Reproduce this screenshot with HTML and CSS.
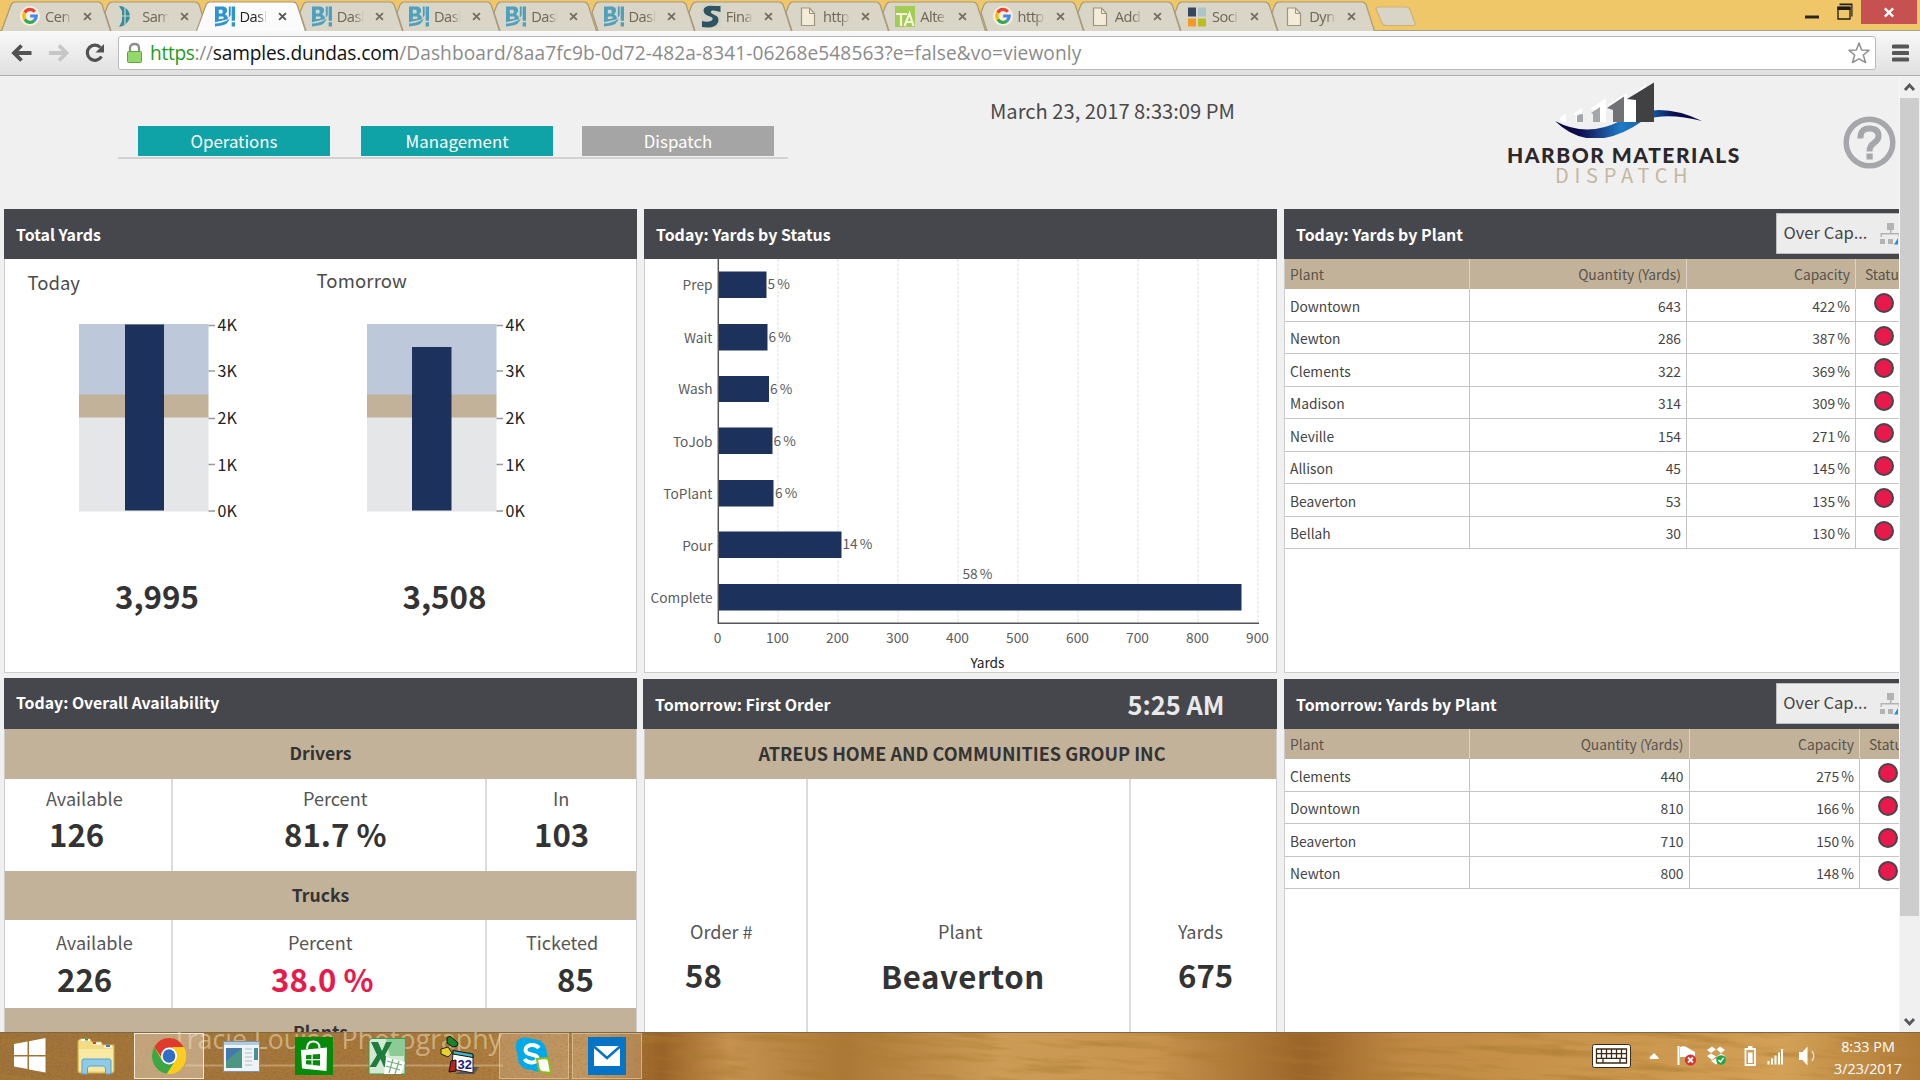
FILE: index.html
```html
<!DOCTYPE html>
<html lang="en">
<head>
<meta charset="utf-8">
<title>Dashboard</title>
<link rel="stylesheet" href="styles.css">
</head>
<body>
<svg class="defs" width="0" height="0" aria-hidden="true">
  <defs>
    <symbol id="tab" viewBox="0 0 110 30"><path d="M13 30.5 L7 12 L10 4.5 Q11.2 1.5 14 1.5 H97 Q100 1.5 101.2 4.5 L109.5 30.5"/></symbol>
    <symbol id="tab-full" viewBox="0 0 110 30"><path d="M.5 30.5 L10 4.5 Q11.2 1.5 14 1.5 H97 Q100 1.5 101.2 4.5 L109.5 30.5"/></symbol>
    <symbol id="x" viewBox="0 0 10 10"><path d="M1.2 1.2 L8.8 8.8 M8.8 1.2 L1.2 8.8" fill="none" stroke="currentColor" stroke-width="2.1"/></symbol>
    <symbol id="google" viewBox="0 0 20 24"><circle cx="10" cy="12" r="10" fill="#f7f0df"/><g fill="none" stroke-width="3.2"><path d="M14.8 7.8 A6.2 6.6 0 0 0 4.7 8.6" stroke="#ea4335"/><path d="M4.7 8.6 A6.5 6.6 0 0 0 4.8 15.4" stroke="#fbbc05"/><path d="M4.8 15.4 A6.2 6.6 0 0 0 14.2 16.6" stroke="#34a853"/><path d="M14.2 16.6 A6.5 6.6 0 0 0 16.2 12 H10.2" stroke="#4285f4"/></g></symbol>
    <symbol id="dundas" viewBox="0 0 20 24"><path d="M2 2 Q8 2 11 6.500 Q15 12 11 17.500 Q8 22 2 23 L5 17 V7 Z" fill="#2f8f9f"/><path d="M8 3 V21 M4 12 H13" stroke="#d9d4c3" stroke-width="1.200"/></symbol>
    <symbol id="bi" viewBox="0 0 21 24"><path fill="currentColor" fill-rule="evenodd" d="M0 2 H9 Q13.500 3 12.500 7.500 L10.500 10.500 Q14 12 13.500 15.500 L0 18.500 Z M4 5.500 V9.500 H7.500 Q9 7.500 7.500 5.500 Z M4 12.500 V15.500 L8.500 14.800 Q10 13 8 12.500 Z M14.500 2 H16.500 V11 L14.500 14 Z M17.500 2 H21 V17 H17.500 Z M17.500 18.500 H21 V23 H17.500 Z M0 20 Q8 20 15.500 15 Q13 21.500 7 22 L0 23 Z"/></symbol>
    <symbol id="bigs" viewBox="0 0 20 24"><rect width="20" height="24" fill="#d3d2c5"/><path d="M19.500 2 H13 Q3 1 2.500 6.500 Q3 11 9 12.500 Q14 14 10 17 Q6 18.500 1 17 V23 Q14 25 17 18.500 Q19 12.500 12.500 10.500 Q8 8.500 11 6.500 Q14 6 19.500 8 Z" fill="#2e5462"/></symbol>
    <symbol id="page" viewBox="0 0 20 24"><path d="M3.500 4 H11.500 L16.500 9.500 V21.500 H3.500 Z" fill="#f4ebd9" stroke="#9d957f" stroke-width="1.200"/><path d="M11.500 4 V9.500 H16.500" fill="none" stroke="#9d957f"/></symbol>
    <symbol id="ta" viewBox="0 0 20 24"><rect y="2" width="20" height="21" fill="#a3cc52"/><path d="M1 10 H12 M6 10 V22 M9.500 22 L14.500 9.500 L18.500 22 M11 18 H17" fill="none" stroke="#f4f3df" stroke-width="2.200"/></symbol>
    <symbol id="squares" viewBox="0 0 20 24"><path d="M1 3.500 H9 V12.500 H1 Z" fill="#33475e"/><path d="M11 3.500 H19 V12.500 H11 Z" fill="#adc4c9"/><path d="M1 14.500 H9 V22.500 H1 Z" fill="#f49a22"/><path d="M11 14.500 H19 V22.500 H11 Z" fill="#bcbd20"/></symbol>
    <symbol id="hier" viewBox="0 0 24 24"><path d="M8 1 h7 v7 h-7 z M11 8 h1.500 v3 H21 v4 h-1.500 v-2.500 H3 V15 H1.500 V11 H11 Z M1 17 h5 v5 h-5 z M9 17 h5 v5 h-5 z" fill="#b3b3b3"/><path d="M15 22.500 L19 16 V22.500 Z" fill="#1c94d4"/></symbol>
  </defs>
</svg>

<div class="screen">
  <header class="strip">
    <div class="tabs">
      <div class="tab"><svg class="shape"><use href="#tab-full"/></svg><svg class="fav"><use href="#google"/></svg><span>Cen</span><svg class="close"><use href="#x"/></svg></div>
      <div class="tab"><svg class="shape"><use href="#tab"/></svg><svg class="fav"><use href="#dundas"/></svg><span>Sam</span><svg class="close"><use href="#x"/></svg></div>
      <div class="tab active"><svg class="shape"><use href="#tab-full"/></svg><svg class="fav"><use href="#bi"/></svg><span>Dasl</span><svg class="close"><use href="#x"/></svg></div>
      <div class="tab"><svg class="shape"><use href="#tab"/></svg><svg class="fav"><use href="#bi"/></svg><span>Dasl</span><svg class="close"><use href="#x"/></svg></div>
      <div class="tab"><svg class="shape"><use href="#tab"/></svg><svg class="fav"><use href="#bi"/></svg><span>Dasl</span><svg class="close"><use href="#x"/></svg></div>
      <div class="tab"><svg class="shape"><use href="#tab"/></svg><svg class="fav"><use href="#bi"/></svg><span>Dasl</span><svg class="close"><use href="#x"/></svg></div>
      <div class="tab"><svg class="shape"><use href="#tab"/></svg><svg class="fav"><use href="#bi"/></svg><span>Dasl</span><svg class="close"><use href="#x"/></svg></div>
      <div class="tab"><svg class="shape"><use href="#tab"/></svg><svg class="fav"><use href="#bigs"/></svg><span>Fina</span><svg class="close"><use href="#x"/></svg></div>
      <div class="tab"><svg class="shape"><use href="#tab"/></svg><svg class="fav"><use href="#page"/></svg><span>http</span><svg class="close"><use href="#x"/></svg></div>
      <div class="tab"><svg class="shape"><use href="#tab"/></svg><svg class="fav"><use href="#ta"/></svg><span>Alte</span><svg class="close"><use href="#x"/></svg></div>
      <div class="tab"><svg class="shape"><use href="#tab"/></svg><svg class="fav"><use href="#google"/></svg><span>http</span><svg class="close"><use href="#x"/></svg></div>
      <div class="tab"><svg class="shape"><use href="#tab"/></svg><svg class="fav"><use href="#page"/></svg><span>Add</span><svg class="close"><use href="#x"/></svg></div>
      <div class="tab"><svg class="shape"><use href="#tab"/></svg><svg class="fav"><use href="#squares"/></svg><span>Soci</span><svg class="close"><use href="#x"/></svg></div>
      <div class="tab"><svg class="shape"><use href="#tab"/></svg><svg class="fav"><use href="#page"/></svg><span>Dyn</span><svg class="close"><use href="#x"/></svg></div>
    </div>
    <svg class="newtab" viewBox="0 0 42 22"><path d="M1 3 Q1 1 3.500 1 H31 Q34 1 35 3.500 L40 17 Q40.500 19.500 38 19.500 H11 Q8 19.500 7 17 Z" fill="#d8d5c6" stroke="#cbb27c" stroke-width="1.200"/></svg>
    <div class="winbtns">
      <svg width="56" height="30" viewBox="0 0 56 30"><path d="M0 15.500 H14 V18.500 H0 Z" fill="#2a2622"/><path d="M33 7.500 H45 V19 H33 Z" fill="none" stroke="#1f1c1a" stroke-width="1.300"/><path d="M32.400 6.500 H45.500 V10 H32.400 Z M34.500 3.500 H47.500 V5.300 H34.500 Z M46.300 4 H47.500 V16.500 H46.300 Z" fill="#1f1c1a"/></svg>
      <div class="winclose"><svg width="12" height="11" viewBox="0 0 10 10"><use href="#x"/></svg></div>
    </div>
  </header>

  <div class="toolbar">
    <svg class="navicons" width="110" height="24" viewBox="0 0 110 24">
      <path d="M31.500 12 H15 M21.500 4.500 L14 12 L21.500 19.500" fill="none" stroke="#525252" stroke-width="3.800"/>
      <path d="M49 12 H65 M59 4.500 L66.500 12 L59 19.500" fill="none" stroke="#c6c6c6" stroke-width="3.800"/>
      <path d="M100.500 6.500 A7.600 7.600 0 1 0 101.500 15.500" fill="none" stroke="#525252" stroke-width="3.200"/><path d="M104 3 V11.500 H95.500 Z" fill="#525252"/>
    </svg>
    <div class="omnibox">
      <svg class="lock" width="17" height="22" viewBox="0 0 17 22"><path d="M4 11 V6 Q4 2 8.500 2 Q13 2 13 6 V11" fill="none" stroke="#8d8d8d" stroke-width="2.300"/><rect x="1.500" y="9.500" width="14" height="11" rx="1" fill="#93d86b" stroke="#5da83c"/></svg>
      <div class="url"><span class="scheme"><i class="sec">https</i>://</span><b>samples.dundas.com</b>/Dashboard/8aa7fc9b-0d72-482a-8341-06268e548563?e=false&amp;vo=viewonly</div>
      <svg class="star" width="24" height="24" viewBox="0 0 24 24"><path d="M12 2 L14.600 9 L22 9.300 L16.300 14 L18.600 21.500 L12 17.800 L5.400 21.500 L7.700 14 L2 9.300 L9.400 9 Z" fill="#fff" stroke="#8f8f8f" stroke-width="1.500" stroke-linejoin="round"/></svg>
    </div>
    <svg class="menu" width="17" height="18" viewBox="0 0 17 18"><path d="M1.500 2.500 H15.500 M1.500 9 H15.500 M1.500 15.500 H15.500" stroke="#565656" stroke-width="4" stroke-linecap="round"/></svg>
  </div>

  <div class="viewport">
    <main class="page">
      <div class="top">
        <nav class="nav"><a>Operations</a><a>Management</a><a class="off">Dispatch</a></nav>
        <div class="now">March 23, 2017 8:33:09 PM</div>
        <div class="brand">
          <svg width="150" height="56" viewBox="0 0 150 56">
            <defs><linearGradient id="wave"><stop offset="0" stop-color="#0b0a3c"/><stop offset=".17" stop-color="#100c50"/><stop offset=".45" stop-color="#1e7cc6"/><stop offset=".68" stop-color="#12529c"/><stop offset=".82" stop-color="#0b0a4c"/><stop offset="1" stop-color="#0b0840"/></linearGradient></defs>
            <path d="M1 39 Q33 56 66 39 Q103 17 148 39 Q113 30 90 38 Q38 75 1 39 Z" fill="url(#wave)"/>
            <path d="M6 36 L12 31 V40 H7 Z M19 32 L28 26 V40 H22 V33 Z M36 27 L52 16 V40 H45 V29 Z M53 23 L73 11 V40 H67 V22 Z M73 18 L92 2 V40 H81 V20 Z" fill="#fff"/>
            <path d="M23 34 Q24 32 29 32 V40 H23 Z M37 31 L46 25 V40 H39 V32 Z" fill="#a3a6aa"/><path d="M53 26 L70 14.500 V40 H59 V28 Z" fill="#717276"/>
            <path d="M73 17 L100 .500 V40 H82 V18 Z" fill="#414042"/><path d="M73 19 L81.500 18.500 V40 H72 Z" fill="#fff"/>
          </svg>
          <strong>HARBOR MATERIALS</strong>
          <em>DISPATCH</em>
        </div>
        <svg class="help" width="53" height="53" viewBox="0 0 53 53"><circle cx="26.500" cy="26.500" r="23.300" fill="none" stroke="#a6a7ab" stroke-width="5.500"/><path d="M17.500 22.500 Q17 12.500 26.500 12.500 Q35.500 12.500 35.500 20 Q35.500 24 31 27 Q26.500 30 26.500 35.500" fill="none" stroke="#a6a7ab" stroke-width="6"/><path d="M23.500 37.500 h6.200 v6 h-6.200 z" fill="#a6a7ab"/></svg>
      </div>

      <div class="grid">
        <section class="panel">
          <h2>Total Yards</h2>
          <div class="body">
            <svg class="gauges" width="631" height="413" viewBox="5 259 631 413">
              <text x="27.500" y="290" class="lab">Today</text><text x="316.500" y="287.500" class="lab wider">Tomorrow</text>
              <g id="scale">
                <rect x="79" y="324" width="129.500" height="71" fill="#bdc8db"/><rect x="79" y="394.500" width="129.500" height="23.500" fill="#c2b299"/><rect x="79" y="417.500" width="129.500" height="94" fill="#e4e6e8"/>
                <path d="M208.500 325.500 h6.500 M208.500 371 h6.500 M208.500 418.500 h6.500 M208.500 464.500 h6.500 M208.500 511 h6.500" stroke="#999" stroke-width="1.300"/>
                <g class="tick"><text x="217.500" y="330.500">4K</text><text x="217.500" y="377">3K</text><text x="217.500" y="424">2K</text><text x="217.500" y="470.500">1K</text><text x="217.500" y="516.500">0K</text></g>
              </g>
              <use href="#scale" x="288"/>
              <rect x="125" y="324.500" width="39" height="186" class="bar"/><rect x="412" y="347" width="39.500" height="163.500" class="bar"/>
              <text x="157" y="608.500" class="big">3,995</text><text x="444.500" y="608.500" class="big">3,508</text>
            </svg>
          </div>
        </section>

        <section class="panel">
          <h2>Today: Yards by Status</h2>
          <div class="body">
            <svg class="chart" width="631" height="413" viewBox="645 259 631 413">
              <path d="M778 259 V622 M838 259 V622 M898 259 V622 M958 259 V622 M1018 259 V622 M1078 259 V622 M1138 259 V622 M1198 259 V622 M1258 259 V622" stroke="#e8e8e8" stroke-width="1.400" stroke-dasharray="3 1.500"/>
              <g class="bar"><path d="M718 271.500 H766.500 V298 H718 Z M718 324 H767.500 V350.500 H718 Z M718 376 H769 V402 H718 Z M718 427.500 H772.500 V454 H718 Z M718 480 H773.500 V506.500 H718 Z M718 531.500 H841.500 V558 H718 Z M718 584 H1241.500 V610.500 H718 Z"/></g>
              <path d="M718.300 259 V623.300 H1259" fill="none" stroke="#55565a" stroke-width="1.500"/>
              <g class="cat"><text x="712.500" y="290">Prep</text><text x="712.500" y="342.500">Wait</text><text x="712.500" y="394">Wash</text><text x="712.500" y="446.500">ToJob</text><text x="712.500" y="499">ToPlant</text><text x="712.500" y="550.500">Pour</text><text x="712.500" y="603">Complete</text></g>
              <g class="pct"><text x="767.500" y="289">5 %</text><text x="768.500" y="341.500">6 %</text><text x="770" y="393.500">6 %</text><text x="773.500" y="445.500">6 %</text><text x="775" y="498">6 %</text><text x="842.500" y="549">14 %</text><text x="962.500" y="579">58 %</text></g>
              <g class="num"><text x="717.500" y="643">0</text><text x="777.500" y="643">100</text><text x="837.500" y="643">200</text><text x="897.500" y="643">300</text><text x="957.500" y="643">400</text><text x="1017.500" y="643">500</text><text x="1077.500" y="643">600</text><text x="1137.500" y="643">700</text><text x="1197.500" y="643">800</text><text x="1257.500" y="643">900</text><text x="987.500" y="668" class="axis">Yards</text></g>
            </svg>
          </div>
        </section>

        <section class="panel wide">
          <h2>Today: Yards by Plant<span class="filter">Over Cap...<svg width="24" height="24"><use href="#hier"/></svg></span></h2>
          <div class="body">
            <table class="plants">
              <colgroup><col class="c1"><col class="c2"><col class="c3"><col></colgroup>
              <tr><th>Plant</th><th>Quantity (Yards)</th><th>Capacity</th><th>Status</th></tr>
              <tr><td>Downtown</td><td>643</td><td>422 %</td><td><i></i></td></tr>
              <tr><td>Newton</td><td>286</td><td>387 %</td><td><i></i></td></tr>
              <tr><td>Clements</td><td>322</td><td>369 %</td><td><i></i></td></tr>
              <tr><td>Madison</td><td>314</td><td>309 %</td><td><i></i></td></tr>
              <tr><td>Neville</td><td>154</td><td>271 %</td><td><i></i></td></tr>
              <tr><td>Allison</td><td>45</td><td>145 %</td><td><i></i></td></tr>
              <tr><td>Beaverton</td><td>53</td><td>135 %</td><td><i></i></td></tr>
              <tr><td>Bellah</td><td>30</td><td>130 %</td><td><i></i></td></tr>
            </table>
          </div>
        </section>

        <section class="panel avail">
          <h2>Today: Overall Availability</h2>
          <div class="body">
            <h3>Drivers</h3>
            <div class="stats drivers">
              <div><p>Available</p><b>126</b></div><div><p>Percent</p><b>81.7 %</b></div><div><p>In</p><b>103</b></div>
            </div>
            <h3>Trucks</h3>
            <div class="stats trucks">
              <div><p>Available</p><b>226</b></div><div><p>Percent</p><b class="red">38.0 %</b></div><div><p>Ticketed</p><b>85</b></div>
            </div>
            <h3>Plants</h3>
          </div>
        </section>

        <section class="panel lower first">
          <h2>Tomorrow: First Order<time>5:25 AM</time></h2>
          <div class="body">
            <h3>ATREUS HOME AND COMMUNITIES GROUP INC</h3>
            <div class="stats order">
              <div><p>Order #</p><b>58</b></div><div><p>Plant</p><b>Beaverton</b></div><div><p>Yards</p><b>675</b></div>
            </div>
          </div>
        </section>

        <section class="panel wide lower">
          <h2>Tomorrow: Yards by Plant<span class="filter">Over Cap...<svg width="24" height="24"><use href="#hier"/></svg></span></h2>
          <div class="body">
            <table class="plants tomorrow">
              <colgroup><col class="c1"><col class="c2"><col class="c3"><col></colgroup>
              <tr><th>Plant</th><th>Quantity (Yards)</th><th>Capacity</th><th>Status</th></tr>
              <tr><td>Clements</td><td>440</td><td>275 %</td><td><i></i></td></tr>
              <tr><td>Downtown</td><td>810</td><td>166 %</td><td><i></i></td></tr>
              <tr><td>Beaverton</td><td>710</td><td>150 %</td><td><i></i></td></tr>
              <tr><td>Newton</td><td>800</td><td>148 %</td><td><i></i></td></tr>
            </table>
          </div>
        </section>
      </div>
    </main>
    <div class="scroll">
      <svg width="20" height="22" viewBox="0 0 20 22"><path d="M5 14 L9.500 9 L14 14" fill="none" stroke="#55565a" stroke-width="2.800"/></svg>
      <div class="thumb"></div>
      <svg width="20" height="22" viewBox="0 0 20 22"><path d="M5 9 L9.500 14 L14 9" fill="none" stroke="#55565a" stroke-width="2.800"/></svg>
    </div>
  </div>

  <footer class="taskbar">
    <svg class="wood" width="1920" height="48" viewBox="0 0 1920 48">
      <defs>
        <linearGradient id="woodbase"><stop offset="0" stop-color="#a0733c"/><stop offset=".22" stop-color="#a87840"/><stop offset=".31" stop-color="#b78547"/><stop offset=".345" stop-color="#9a6226"/><stop offset=".38" stop-color="#c69250"/><stop offset=".44" stop-color="#ac7836"/><stop offset=".52" stop-color="#cc9c56"/><stop offset=".6" stop-color="#c8944e"/><stop offset=".68" stop-color="#9b6428"/><stop offset=".73" stop-color="#bf8844"/><stop offset=".8" stop-color="#c8924a"/><stop offset=".93" stop-color="#d2a056"/><stop offset="1" stop-color="#b07a38"/></linearGradient>
        <filter id="grain" x="0" y="0" width="100%" height="100%"><feTurbulence type="fractalNoise" baseFrequency=".012 .12" numOctaves="4" seed="7"/><feColorMatrix values="0 0 0 0 .4  0 0 0 0 .2  0 0 0 0 .03  0 3 0 0 -1.400"/></filter>
        <filter id="speck" x="0" y="0" width="100%" height="100%"><feTurbulence type="fractalNoise" baseFrequency=".35 .5" numOctaves="2" seed="3"/><feColorMatrix values="0 0 0 0 .25  0 0 0 0 .13  0 0 0 0 .02  0 2.500 0 0 -1.150"/></filter>
      </defs>
      <rect width="1920" height="48" fill="url(#woodbase)"/>
      <g transform="rotate(4 960 24)"><rect x="-20" y="-80" width="1960" height="208" filter="url(#grain)" opacity=".6"/></g>
      <rect width="650" height="48" filter="url(#speck)" opacity=".55"/>
      <path d="M185 33.500 H503" stroke="#d8c49c" stroke-opacity=".5" stroke-width="2"/>
      <path d="M0 .500 H1920" stroke="#7d6a45"/>
    </svg>
    <div class="mark">Tracie Louise Photography</div>
    <div class="apps">
      <div class="app"><svg width="34" height="36" viewBox="0 0 34 36"><path d="M1 6 L14.500 3.500 V17 H1 Z M16 3.200 L32.500 0 V17 H16 Z M1 18.500 H14.500 V31 L1 28.500 Z M16 18.500 H32.500 V34.500 L16 31.500 Z" fill="#fff"/></svg></div>
      <div class="app"><svg width="40" height="40" viewBox="0 0 40 40"><path d="M3 3 H13 L15 6 H24 L26 9 H37 V35 Q37 37 35 37 H3 Q1 37 1 35 V5 Z" fill="#f1dc83" stroke="#cfae4d"/><path d="M4 3 h9 v2 h-9 z M16 6.500 h8 v2 h-8 z M27 9.500 h8 v2 h-8 z" fill="#fff"/><path d="M8 2.500 h3 v2 h-3 z" fill="#2f9b45"/><path d="M16 6 h3 v2 h-3 z" fill="#d23a2e"/><path d="M29 9 h4 v2 h-4 z" fill="#3d7cc6"/><path d="M2 13 H36 V35 H2 Z" fill="#f7e9a3"/><path d="M5 25 Q5 23 7 23 H32 Q34 23 34 25 V38 H28.500 V32 Q28 30 26 30 H13 Q11 30 10.500 32 V38 H5 Z" fill="#8fcbe9" stroke="#56a3cc"/></svg></div>
      <div class="app run on"><svg width="36" height="38" viewBox="0 0 36 36" preserveAspectRatio="none"><circle cx="18" cy="18" r="17" fill="#fccd1c"/><path d="M3.200 9.500 A17 17 0 0 1 32.800 9.500 L18 10 L11 20 Z" fill="#de3a2e"/><path d="M3.200 9.500 A17 17 0 0 0 16 34.900 L24.500 22 L11 22 Z" fill="#3fa648"/><path d="M32.800 9.500 A17 17 0 0 1 16 34.900 L25 22 L22 9.800 Z" fill="#fccd1c"/><circle cx="18" cy="18" r="8" fill="#fff"/><circle cx="18" cy="18" r="6.300" fill="#2f6fc5"/></svg></div>
      <div class="app"><svg width="37" height="31" viewBox="0 0 37 31"><path d="M.500 .500 H36.500 V30.500 H.500 Z" fill="#eef3f6" stroke="#7d93a6"/><path d="M1 1 H36 V4 H1 Z" fill="#aecbe2"/><path d="M3 7 H19 V27 H3 Z" fill="#4c9684"/><path d="M3 7 H19 L3 20 Z" fill="#4379ae"/><path d="M22 8 h7 M22 12 h7 M22 16 h7 M22 20 h7 M22 24 h7" stroke="#c9ced2" stroke-width="1.500"/><path d="M31 7 h4 v12 h-4 z" fill="#4c8d95"/></svg></div>
      <div class="app"><svg width="38" height="38" viewBox="0 0 38 38"><path d="M0 0 H38 V38 H0 Z" fill="#068a09"/><path d="M6 13 L32 10.500 L31.500 34 L7 31.500 Z" fill="#fff"/><path d="M12 12 Q12 4.500 18 4.500 Q24.500 4.500 24.500 11" fill="none" stroke="#fff" stroke-width="2"/><path d="M11 18.300 L16.500 17.800 V22 H11 Z M17.700 17.600 L25 17 V22 H17.700 Z M11 23.200 H16.500 V27.800 L11 27.200 Z M17.700 23.200 H25 V28.700 L17.700 28 Z" fill="#068a09"/></svg></div>
      <div class="app"><svg width="38" height="37" viewBox="0 0 38 37"><path d="M3 .500 H37 V36 H1 V3 Z" fill="#d3ead2" stroke="#3b9b53"/><path d="M18 1 H37 V18 H22 Z" fill="#8ccb96"/><path d="M3 4 H10 L14 13 L18 4 H24 L17 17 L24 29 H16 L12.500 21 L8 29 H1.500 L9 17 Z" fill="#1f7c3c"/><path d="M18 19 L37 24 L33 36 H16 Z" fill="#fff"/><path d="M19 23 l15 4 M18 28 l14 4 M25 21 l-4 14 M31 23 l-4 13" stroke="#70b17c" stroke-width="1.200"/></svg></div>
      <div class="app"><svg width="40" height="40" viewBox="0 0 40 40"><path d="M7 2 L10 0 L18 7 L17 10 L13 11 L7 7 Z" fill="#16852b" stroke="#111"/><path d="M1 13 L8 11 L12 17 L8 21 L1 18 Z" fill="#e8d22c" stroke="#222"/><path d="M32 31 H39 L34 38 H14 Z" fill="#56555a"/><path d="M13 16 L33 19 V37 L12 33 Z" fill="#fff" stroke="#222"/><path d="M13 14.500 L33 18 V21.500 L13 18 Z" fill="#45b6c7" stroke="#111"/><path d="M11 25 L16 24 V35 L9 36 Z" fill="#b52222" stroke="#111"/><text x="17.500" y="32.500" class="cal">32</text></svg></div>
      <div class="app run skype"><svg width="38" height="38" viewBox="0 0 38 38"><path d="M1 11 Q0 1 10 .500 Q14 0 17 2 Q31 2 32 17 Q36 30 27 34 Q22 36 17 33 Q3 33 2.500 18 Z" fill="#00a9ea"/><path d="M24 11 Q21 7.500 16 8 Q10.500 9 10.500 13 Q10.500 16.500 16.500 17.500 Q23 18.500 22.500 22 Q21.500 25.500 16 25.500 Q11.500 25 9.500 22" fill="none" stroke="#fff" stroke-width="4"/><path d="M22 22 L31 21 Q34 22 34 25 L36 36 L27 35 Q24 34 23.500 31 Z" fill="#fff" stroke="#8dbb18" stroke-width="2"/></svg></div>
      <div class="app run mail"><svg width="38" height="38" viewBox="0 0 38 38"><path d="M0 0 H38 V38 H0 Z" fill="#0573c6"/><path d="M6 9 H32 V29 H6 Z" fill="#fff"/><path d="M6 9.500 L19 21 L32 9.500" fill="none" stroke="#0573c6" stroke-width="2.500"/></svg></div>
    </div>
    <svg class="tray" width="236" height="30" viewBox="1590 1042 236 30">
      <g stroke="#3c2a12" stroke-width="1"><rect x="1592.500" y="1045.500" width="38" height="23" rx="2" fill="#fff"/><path d="M1650 1060 H1658.500 V1058.500 L1654 1054 L1649.500 1058.500 Z" fill="#fff" stroke="none"/></g>
      <path d="M1596.500 1050 H1626.500 V1064 H1596.500 Z M1596.500 1054.600 H1626.500 M1596.500 1059.300 H1626.500 M1601.500 1050 V1059 M1606.500 1050 V1059 M1611.500 1050 V1059 M1616.500 1050 V1059 M1621.500 1050 V1059 M1603 1059 V1064 M1620 1059 V1064" fill="none" stroke="#3c2a12" stroke-width="1.300"/>
      <path d="M1678.500 1047 V1066" stroke="#fff" stroke-width="2"/><path d="M1680 1048 Q1685 1046 1688 1049 L1695 1053 V1060 Q1690 1060 1687 1058 H1680 Z" fill="#fff"/><circle cx="1690.500" cy="1061" r="5.600" fill="#dd3034"/><path d="M1688 1058.500 l5 5 m0 -5 l-5 5" stroke="#fff" stroke-width="1.800"/>
      <path d="M1707 1051 L1712 1047.500 L1716 1050.500 L1711 1054 Z M1716.500 1050.500 L1720 1047.500 L1725 1051 L1721 1054 Z M1707 1057 L1711 1054.500 L1716 1057.500 L1712 1061 Z M1716.500 1057.500 L1721 1054.500 L1725 1057 L1720 1061 Z M1711 1062 L1716 1059.500 L1720 1062 L1716 1065.500 Z" fill="#fff"/><circle cx="1721" cy="1061" r="4.800" fill="#23a447"/><path d="M1718.500 1061 l2 2 l3 -4" stroke="#fff" stroke-width="1.400" fill="none"/>
      <path d="M1745.500 1050 H1755 V1066 H1745.500 Z" fill="none" stroke="#fff" stroke-width="1.800"/><path d="M1748 1053.500 h4.600 v10.500 h-4.600 z M1748 1047 h4.500 v2.500 h-4.500 z" fill="#fff"/>
      <path d="M1767.500 1062 h2 v3.500 h-2 z M1771 1059.500 h2 v6 h-2 z M1774.500 1056.500 h2 v9 h-2 z M1778 1053.500 h2 v12 h-2 z M1781 1050 h2 v15.500 h-2 z" fill="#fff"/>
      <path d="M1799 1053 h3.500 l5 -5.500 v19 l-5 -5.500 h-3.500 z" fill="#fff"/><path d="M1812 1052 q3.500 5 0 10" stroke="#ead9bb" stroke-width="1.400" fill="none"/>
    </svg>
    <div class="clock"><span>8:33 PM</span><span>3/23/2017</span></div>
  </footer>
</div>
</body>
</html>
```
FILE: styles.css
```css
* { box-sizing: border-box; margin: 0; padding: 0; }
body { width: 1920px; height: 1080px; overflow: hidden; background: #f0f0f0; color: #333; font-family: "Noto Sans CJK SC", "Noto Sans", sans-serif; }
svg { display: block; flex: none; }
.defs { position: absolute; }
i, em { font-style: normal; }
.screen { display: flex; flex-direction: column; height: 1080px; }

/* browser chrome */
.strip { display: flex; height: 31px; background: #f0c768; border-bottom: 1px solid #a5a294; font-family: "Open Sans", "Noto Sans", sans-serif; }
.tabs { display: flex; padding-left: 1px; }
.tab { display: flex; align-items: flex-start; width: 110px; margin-right: -12.750px; height: 31px; padding-left: 20px; isolation: isolate; color: #6f6656; font-size: 14.600px; position: relative; }
.shape { position: absolute; z-index: -1; left: 0; top: 0; width: 110px; height: 31px; fill: #d9d5c7; stroke: #a8997a; stroke-width: 1.200; }
.active { z-index: 2; color: #222; }
.active .shape { fill: #fbfbfb; }
.fav { width: 20px; height: 24px; margin: 4px 1px 0 -1px; color: #4fa0bd; }
.active .fav { color: #2c93d6; }
.tab:nth-child(n+3) .fav { margin-left: -1px; margin-right: 1px; }
.tab span { width: 27px; margin-left: 4px; line-height: 32px; height: 31px; letter-spacing: -.5px; white-space: nowrap; -webkit-mask: linear-gradient(90deg, #000 65%, transparent); mask: linear-gradient(90deg, #000 65%, transparent); }
.close { width: 9px; height: 9px; margin: 12px 0 0 11px; color: #78705f; }
.active .close { color: #555; }
.newtab { width: 42px; height: 22px; margin: 6px 0 0 12px; }
.winbtns { display: flex; margin-left: auto; padding-right: 3px; }
.winclose { display: flex; align-items: center; justify-content: center; width: 56px; height: 24px; background: #c75050; color: #fff; }

.toolbar { display: flex; align-items: center; height: 45px; background: linear-gradient(#f8f8f8, #e0e0e0); border-bottom: 1px solid #adadad; font-family: "Open Sans", "Noto Sans", sans-serif; }
.navicons { margin-right: 8px; }
.omnibox { display: flex; align-items: center; width: 1758px; height: 34px; padding: 0 4px 0 7px; background: #fff; border: 1px solid #b9b9b9; border-radius: 3px; }
.url { flex: 1; padding: 0 0 0 7px; font-size: 19.100px; line-height: 32px; letter-spacing: .100px; color: #8b8b8b; white-space: nowrap; }
.scheme { letter-spacing: -.3px; }
.url .sec { color: #1a9c1a; }
.url b { font-weight: 400; letter-spacing: -.120px; color: #111; }
.menu { margin-left: 16px; }

/* page */
.viewport { display: flex; height: 956px; overflow: hidden; }
.page { width: 1900px; overflow: hidden; border-right: 1px solid #f7f7f7; }
.top { display: flex; height: 133px; }
.nav { display: flex; gap: 30px; width: 670px; height: 83px; margin-left: 118px; padding: 50px 14px 1px 20px; border-bottom: 2px solid #d2d2d2; }
.nav a { flex: 1; background: #0fa2a6; color: #fff; text-align: center; font-size: 16.850px; line-height: 29px; }
.nav a:nth-child(2) { margin: 0 -1px 0 1px; }
.nav .off { background: #a5a5a5; }
.now { width: 500px; margin-left: 202px; padding-top: 21px; font-size: 20.170px; line-height: 28px; color: #4a4a4a; }
.brand { display: flex; flex-direction: column; width: 260px; padding: 6px 0 0 17px; }
.brand svg { margin-left: 47px; }
.brand strong { font: 900 21px/22px Lato, "Noto Sans", sans-serif; letter-spacing: 1.520px; color: #2b272a; white-space: nowrap; margin-top: 6px; }
.brand em { font-size: 20px; line-height: 24px; letter-spacing: 5.700px; color: #c5b79f; margin: -3px 0 0 48px; }
.help { margin: 40px 0 0 93px; }

.grid { display: grid; grid-template-columns: 633px 633px 633px; grid-template-rows: 464px 400px; gap: 5px 7px; padding-left: 4px; }
.panel { display: flex; flex-direction: column; min-height: 0; }
.panel h2 { display: flex; flex: none; height: 50px; padding-left: 12px; background: #46474c; color: #fff; font-size: 15.950px; line-height: 50px; font-weight: 700; white-space: nowrap; }
.panel .body { flex: 1; background: #fff; border: 1px solid #cdcdcd; border-top: 0; min-height: 0; }
.avail h2 { height: 51px; font-size: 15.850px; }
.lower { padding-top: 1px; }
.first h2 { margin-left: -1px; }
.filter { display: flex; align-items: center; width: 160px; height: 41px; margin: 4px 0 0 313px; padding-left: 6.500px; background: #ececec; border: 1px solid #bdbdbd; color: #444; font-size: 16.570px; font-weight: 400; line-height: 37px; padding-bottom: 2px; }
.lower .filter { margin-left: 279px; }
.filter svg { margin: 2px 0 0 12px; }

/* charts */
.bar { fill: #1c325d; }
.lab { font-size: 18.500px; fill: #4b4b4b; }
.wider { letter-spacing: .150px; }
.tick { font-size: 16px; fill: #222; }
.big { font-size: 31.300px; font-weight: 700; fill: #333; text-anchor: middle; }
.cat, .pct, .num { font-size: 13.700px; fill: #5c5c5c; }
.cat { text-anchor: end; }
.pct { word-spacing: -.900px; }
.num { text-anchor: middle; }
.axis { fill: #222; }

/* plant tables */
.plants { width: 631px; border-collapse: separate; border-spacing: 0; table-layout: fixed; font-size: 13.800px; color: #444; }
.c1 { width: 185px; } .c2 { width: 217px; } .c3 { width: 169px; }
.tomorrow .c2 { width: 219.500px; } .tomorrow .c3 { width: 170.500px; }
.plants th { height: 30px; background: #c2b299; color: #58524b; font-weight: 400; border-right: 1px solid #ddd3c2; }
.plants td { height: 32.500px; border-right: 1px solid #c4c4c4; border-bottom: 1px solid #c4c4c4; }
.plants tr > * { text-align: right; line-height: 20px; padding: 2px 5px 0; word-spacing: -.900px; }
.plants tr > th { word-spacing: 0; padding-top: 0; }
.plants tr > :first-child { text-align: left; padding-left: 5px; }
.plants tr > :last-child { text-align: left; padding-left: 9px; }
.plants tr > td:last-child { padding: 0 0 3px 18px; }
.plants i { display: block; width: 20px; height: 20px; border-radius: 50%; background: #e8194b; border: 2px solid #47464a; }

/* availability */
.panel h3 { height: 50px; background: #c2b299; color: #333; text-align: center; font-size: 17.600px; line-height: 48px; font-weight: 700; }
.first h3 { font-size: 18.080px; padding-left: 3px; }
.avail h3:nth-of-type(2) { height: 49px; }
.stats { display: grid; grid-template-columns: 168px 314px 1fr; }
.stats div { border-right: 2px solid #dcdcdc; }
.stats div:last-child { border: 0; }
.stats p { font-size: 18.100px; line-height: 24px; color: #555; white-space: nowrap; }
.stats b { display: block; font-size: 31.200px; line-height: 34px; color: #333; white-space: nowrap; }
.stats .red { color: #e8194b; }
.drivers { height: 92px; }
.drivers div { padding-top: 7px; }
.drivers b { margin-top: 7px; }
.trucks { height: 88px; }
.trucks div { padding-top: 10px; }
.trucks b { margin-top: 8px; }
.drivers div:nth-child(1) p { padding-left: 41px; } .drivers div:nth-child(1) b { padding-left: 44px; }
.drivers div:nth-child(2) p { padding-left: 130px; } .drivers div:nth-child(2) b { padding-left: 111px; }
.drivers div:nth-child(3) p { padding-left: 66px; } .drivers div:nth-child(3) b { padding-left: 47px; }
.trucks div:nth-child(1) p { padding-left: 51px; } .trucks div:nth-child(1) b { padding-left: 52px; }
.trucks div:nth-child(2) p { padding-left: 115px; } .trucks div:nth-child(2) b { padding-left: 98px; }
.trucks div:nth-child(3) p { padding-left: 39px; } .trucks div:nth-child(3) b { padding-left: 70px; }
.panel time { margin-left: 297px; font-size: 25.400px; line-height: 51px; color: #e9e9e9; }
.first h2 { font-size: 16.050px; }
.order { grid-template-columns: 163px 323px 1fr; height: 300px; }
.order div { padding-top: 140px; }
.order b { margin-top: 15px; }
.order div:nth-child(1) p { padding-left: 45px; } .order div:nth-child(1) b { padding-left: 40px; }
.order div:nth-child(2) p { padding-left: 130px; } .order div:nth-child(2) b { padding-left: 73px; padding-top: 1px; letter-spacing: .550px; }
.order div:nth-child(3) p { padding-left: 47px; } .order div:nth-child(3) b { padding-left: 47px; }

.scroll { display: flex; flex-direction: column; width: 20px; background: #f0f0f0; }
.thumb { width: 19px; height: 818px; margin-bottom: auto; background: #cdcdcd; }

/* taskbar */
.taskbar { position: relative; display: flex; height: 48px; align-items: center; isolation: isolate; overflow: hidden; font-family: "Open Sans", "Noto Sans", sans-serif; }
.wood { position: absolute; z-index: -2; left: 0; top: 0; }
.mark { position: absolute; z-index: -1; left: 172px; top: -11px; font-size: 26.690px; line-height: 36px; color: rgba(226, 208, 168, .65); white-space: nowrap; }
.apps { display: flex; height: 46px; padding-left: 13px; }
.app { display: flex; align-items: center; justify-content: center; width: 72.600px; }
.app:nth-child(1) { width: 34px; margin-right: 14px; }
.run { width: 70px; border: 1px solid rgba(235, 220, 190, .5); background: rgba(235, 220, 200, .22); margin-right: 2px; }
.skype { margin: 0 3px 0 3px; }
.on { background: rgba(235, 222, 205, .45); border-color: #f3ead8; }
.cal { font: 700 13px "Liberation Sans", sans-serif; fill: #1a1a8c; }
.tray { margin-left: auto; }
.clock { display: flex; flex-direction: column; width: 84px; margin: 3px 10px 0 0; text-align: center; color: #fff; font-size: 14.360px; line-height: 22px; }
```
